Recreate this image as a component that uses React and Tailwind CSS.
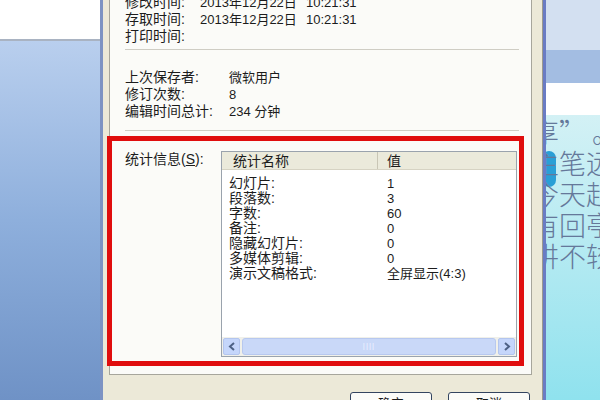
import React from 'react';

const font = { fontFamily: '"Liberation Sans", "Noto Sans CJK SC", sans-serif' };

const topRows = [
  ['修改时间:', '2013年12月22日', '10:21:31'],
  ['存取时间:', '2013年12月22日', '10:21:31'],
  ['打印时间:', '', ''],
];

const saveRows = [
  ['上次保存者:', '微软用户'],
  ['修订次数:', '8'],
  ['编辑时间总计:', '234 分钟'],
];

const stats = [
  ['幻灯片:', '1'],
  ['段落数:', '3'],
  ['字数:', '60'],
  ['备注:', '0'],
  ['隐藏幻灯片:', '0'],
  ['多媒体剪辑:', '0'],
  ['演示文稿格式:', '全屏显示(4:3)'],
];

const slideLines = ['享” 。', '主笔远', '今天起', '有回亭', '讲不较'];

export default function App() {
  return (
    <div className="relative flex h-[400px] w-[600px] overflow-hidden text-[#1c1c1c]" style={font}>
      {/* left: app window behind */}
      <div className="flex w-[100px] shrink-0 flex-col">
        <div className="h-[39px] bg-white" />
        <div className="h-[2px] bg-[#a9b3c2]" />
        <div className="flex-1 bg-gradient-to-b from-[#b9cfee] via-[#8eafdc] to-[#6f92c6]" />
      </div>
      <div className="w-[3px] shrink-0 bg-[#7d93c3]" />

      {/* dialog */}
      <div className="flex w-[439px] shrink-0 flex-col bg-[#ece9d8] pl-[6px] pr-[10px]">
        <div className="flex h-[375px] shrink-0 flex-col border-x border-b border-[#a7a69c] bg-[#fbfbf8] pl-[15px] pr-[12px]">
          <div className="mt-[-6px] text-[14px] leading-[17px]">
            {topRows.map(([l, d, t]) => (
              <div key={l} className="flex">
                <span className="w-[75px]">{l}</span>
                <span className="w-[106px] text-[13px]">{d}</span>
                <span className="text-[13px]">{t}</span>
              </div>
            ))}
          </div>
          <div className="mt-[4px] h-px bg-[#cfcdc4]" />
          <div className="mt-[19px] text-[14px] leading-[17px]">
            {saveRows.map(([l, v]) => (
              <div key={l} className="flex">
                <span className="w-[104px]">{l}</span>
                <span className="text-[13px]">{v}</span>
              </div>
            ))}
          </div>
          <div className="mt-[10px] h-px bg-[#cfcdc4]" />

          <div className="mt-[20px] flex">
            <div className="w-[96px] pt-[1px] text-[14px] leading-[14px]">
              统计信息(<span className="underline">S</span>):
            </div>
            <div className="flex h-[206px] w-[296px] flex-col border border-[#9aa3ad] bg-white">
              <div className="flex h-[18px] border-b border-[#d6d3c3] bg-[#ebeadb] text-[14px] leading-[18px]">
                <div className="w-[156px] border-r border-[#c9c6b5] pl-[11px]">统计名称</div>
                <div className="pl-[9px]">值</div>
              </div>
              <div className="flex-1 pt-[6px] text-[14px] leading-[15px]">
                {stats.map(([n, v]) => (
                  <div key={n} className="flex">
                    <span className="w-[165px] pl-[7px]">{n}</span>
                    <span className="text-[13px]">{v}</span>
                  </div>
                ))}
              </div>
              <div className="flex h-[19px] items-center gap-[2px] bg-[#f0f0ea] px-[1px] pb-[1px]">
                <div className="flex h-[17px] w-[17px] items-center justify-center rounded-[2px] border border-[#b3c5ee] bg-[#c5d6fb]">
                  <svg width="8" height="9" viewBox="0 0 8 9"><path d="M6 1 L2 4.5 L6 8" fill="none" stroke="#4d6185" strokeWidth="2" /></svg>
                </div>
                <div className="flex h-[17px] flex-1 items-center justify-center rounded-[3px] border border-[#b7c8ef] bg-[#c9d8f8]">
                  <span className="text-[8px] leading-none tracking-[1px] text-[#eef3ff]">||||</span>
                </div>
                <div className="flex h-[17px] w-[17px] items-center justify-center rounded-[2px] border border-[#b3c5ee] bg-[#c5d6fb]">
                  <svg width="8" height="9" viewBox="0 0 8 9"><path d="M2 1 L6 4.5 L2 8" fill="none" stroke="#4d6185" strokeWidth="2" /></svg>
                </div>
              </div>
            </div>
          </div>
        </div>
        <div className="mt-[17px] flex shrink-0 justify-end gap-[16px] pr-[2px]">
          <div className="h-[24px] w-[82px] rounded-[3px] border border-[#33445f] bg-[#fbfbf8] pt-[1px] text-center text-[13px]">确定</div>
          <div className="h-[24px] w-[82px] rounded-[3px] border border-[#33445f] bg-[#fbfbf8] pt-[1px] text-center text-[13px]">取消</div>
        </div>
      </div>
      <div className="w-px shrink-0 bg-[#9c9a8e]" />
      <div className="w-[3px] shrink-0 bg-[#6a7cc4]" />

      {/* right: slide */}
      <div className="flex flex-1 flex-col overflow-hidden">
        <div className="h-[50px] shrink-0 bg-[#d3e0f1]" />
        <div className="h-[33px] shrink-0 bg-[#a3bde2]" />
        <div className="h-[32px] shrink-0 bg-white" />
        <div className="relative flex-1 overflow-hidden bg-gradient-to-b from-[#d3f1f5] to-[#8fe2ee]">
          <div className="absolute left-[-4px] top-[36px] h-[36px] w-[14px] rounded-full bg-[#2a9fd6]" />
          <div className="relative ml-[-14px] pt-[1px] text-[27px] leading-[31px] whitespace-nowrap text-[#65789a]" style={{ fontFamily: '"Noto Sans CJK SC", sans-serif', fontWeight: 300 }}>
            {slideLines.map((l) => (
              <div key={l} className="h-[31px]">{l}</div>
            ))}
          </div>
        </div>
      </div>

      {/* red annotation */}
      <div className="pointer-events-none absolute left-[107px] top-[136px] h-[230px] w-[417px] border-[5px] border-[#e00d0d]" />
    </div>
  );
}
